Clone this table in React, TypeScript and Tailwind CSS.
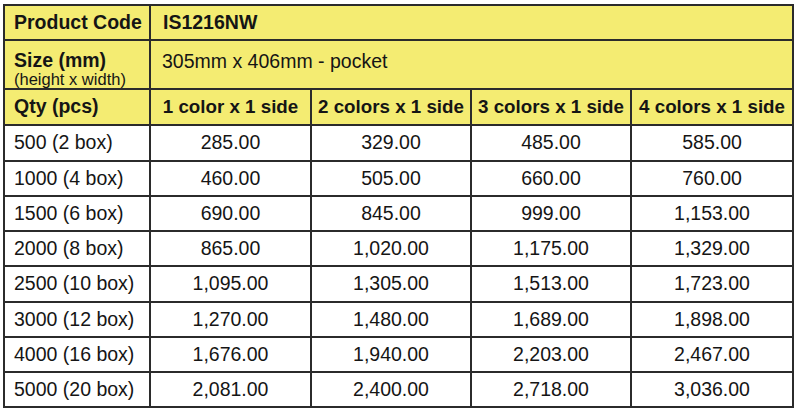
const rows = [
  { qty: "500 (2 box)", prices: ["285.00", "329.00", "485.00", "585.00"], h: "h-[36px]" },
  { qty: "1000 (4 box)", prices: ["460.00", "505.00", "660.00", "760.00"], h: "h-[35px]" },
  { qty: "1500 (6 box)", prices: ["690.00", "845.00", "999.00", "1,153.00"], h: "h-[35px]" },
  { qty: "2000 (8 box)", prices: ["865.00", "1,020.00", "1,175.00", "1,329.00"], h: "h-[35px]" },
  { qty: "2500 (10 box)", prices: ["1,095.00", "1,305.00", "1,513.00", "1,723.00"], h: "h-[36px]" },
  { qty: "3000 (12 box)", prices: ["1,270.00", "1,480.00", "1,689.00", "1,898.00"], h: "h-[35px]" },
  { qty: "4000 (16 box)", prices: ["1,676.00", "1,940.00", "2,203.00", "2,467.00"], h: "h-[35px]" },
  { qty: "5000 (20 box)", prices: ["2,081.00", "2,400.00", "2,718.00", "3,036.00"], h: "h-[35px]" },
];

const headers = ["1 color x 1 side", "2 colors x 1 side", "3 colors x 1 side", "4 colors x 1 side"];

const cell = "border-r-2 border-b-2 border-[#2b2b2b]";

export default function App() {
  return (
    <div className="w-[800px] h-[413px] bg-white pt-[4px] pl-[3px] font-['Liberation_Sans',Arial,sans-serif] text-[#151515]">
      <table className="table-fixed border-separate border-spacing-0 border-l-2 border-t-2 border-[#2b2b2b] w-[791px] text-[19.5px] leading-none">
        <colgroup>
          <col className="w-[146px]" />
          <col className="w-[161px]" />
          <col className="w-[160px]" />
          <col className="w-[160px]" />
          <col className="w-[162px]" />
        </colgroup>
        <tbody>
          <tr className="h-[35px] bg-[#f4ec72]">
            <td className={`${cell} pl-[9px] font-bold`}>Product Code</td>
            <td colSpan={4} className={`${cell} pl-[12px] font-bold`}>IS1216NW</td>
          </tr>
          <tr className="h-[49px] bg-[#f4ec72]">
            <td className={`${cell} pl-[9px] align-top pt-[10px]`}>
              <div className="font-bold leading-[19px]">Size (mm)</div>
              <div className="text-[16.5px] leading-[17px] pt-[1px]">(height x width)</div>
            </td>
            <td colSpan={4} className={`${cell} pl-[11px] align-top pt-[11px]`}>305mm x 406mm - pocket</td>
          </tr>
          <tr className="h-[36px] bg-[#f4ec72] font-bold">
            <td className={`${cell} pl-[9px]`}>Qty (pcs)</td>
            {headers.map((h) => (
              <td key={h} className={`${cell} text-center text-[18.75px]`}>{h}</td>
            ))}
          </tr>
          {rows.map((r) => (
            <tr key={r.qty} className={r.h}>
              <td className={`${cell} pl-[9px]`}>{r.qty}</td>
              {r.prices.map((p, i) => (
                <td key={i} className={`${cell} text-center`}>{p}</td>
              ))}
            </tr>
          ))}
        </tbody>
      </table>
    </div>
  );
}
